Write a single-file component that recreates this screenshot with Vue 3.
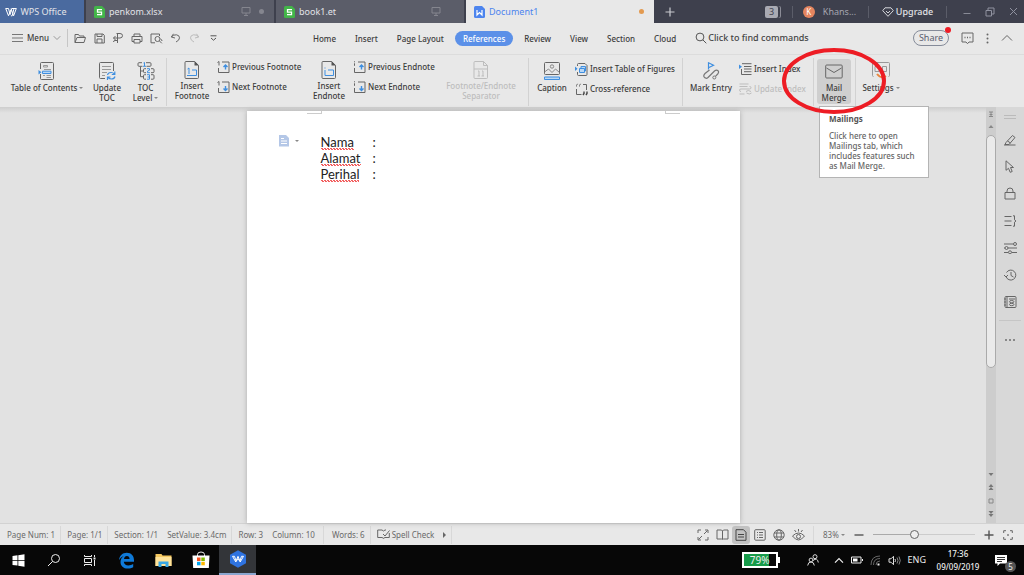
<script setup>
import { h, ref } from 'vue'

const D = '#666'
const B = '#3f8fe0'
const doc = (s, b) => `<g fill="none" stroke="${s}">${b}</g>`

// name: [width, height, markup]
const icons = {
  wps: [12, 10, '<path d="M.7 1.5h2.8l1.6 6 1.7-6H9L7.2 8.8 5.9 8.8M.7 1.5l2.8 7.3L6 2.6M11.3 1.5 8.6 8.8 6 1.5M11.4 1.5H8.6" fill="none" stroke="#fff" stroke-width="1"/>'],
  sheet: [11, 12, '<path d="M0 1.5Q0 0 1.500 0H8l3 3v7.500q0 1.500-1.500 1.500h-8Q0 12 0 10.500z" fill="#43b549"/><path d="M8 3.700H3.500v2.500h4v2.500H3" fill="none" stroke="#fff" stroke-width="1.300"/>'],
  word: [11, 12, '<path d="M0 1.5Q0 0 1.500 0H8l3 3v7.500q0 1.500-1.500 1.500h-8Q0 12 0 10.500z" fill="#4c84ee"/><path d="M3 4v5l2.500-2.500L8 9V4" fill="none" stroke="#fff" stroke-width="1.200"/>'],
  monitor: [10, 9, '<path d="M1 .5h8v5.500H1zM5 6v2.500M3 8.500h4" fill="none" stroke="#85868f"/>'],
  plus: [10, 10, '<path d="M5 .5v9M.5 5h9" fill="none" stroke="#c9cad0" stroke-width="1.200"/>'],
  gem: [12, 10, '<path d="M3 .8h6L11.300 3.700 6 9.300.7 3.700zM4 4l2 2 2-2" fill="none" stroke="#d4d5da"/>'],
  min: [8, 8, '<path d="M.5 5.500h7" stroke="#888a96"/>'],
  restore: [10, 10, '<path d="M1 3.500h5.500V9H1zM3 3.500V1h6v6H6.500" fill="none" stroke="#9092a0"/>'],
  close: [9, 9, '<path d="m1 1 7 7M8 1 1 8" stroke="#9092a0"/>'],
  burger: [11, 8, '<path d="M0 .5h11M0 4h11M0 7.500h11" stroke="#777"/>'],
  chev: [8, 6, '<path d="m.7 1.200 3.300 3.300 3.300-3.300" fill="none" stroke="#999"/>'],
  up: [12, 8, '<path d="m1 6.500 5-5 5 5" fill="none" stroke="#666"/>'],
  open: [12, 11, doc(D, '<path d="M1 9.500V1.500h3.500l1 1.500h4.500v1.500M1 9.500l2-5h8.500l-1.500 5z"/>')],
  save: [11, 11, doc(D, '<path d="M1 1h8l1.300 1.300V10H1zM3 1v2.500h5V1M3 10V6h5v4"/>')],
  output: [12, 12, doc(D, '<path d="M4.500 1.500H8q2.500 0 2.500 2.200T8 6H1.500M3.500 4 1.500 6l2 2M5.500 1.500v9.500M5.500 8.500H3q-1.500 0-1.500 1.500"/>')],
  print: [12, 11, doc(D, '<path d="M3 3.500V1h6v2.500M3 8.500H1v-5h10v5H9M3 6.500h6V10H3z"/>')],
  preview: [13, 11, doc(D, '<path d="M5 9.800H1V1h8.500v2"/><circle cx="7.500" cy="6" r="2.500"/><path d="m9.500 8 2.300 2.300M10.500 6q1.500.5 1.500 2"/>')],
  undo: [11, 10, doc(D, '<path d="M3.500.8 1.300 4 5 5M1.500 3.800q2-2.300 5-2 3 .5 3 3T6 9"/>')],
  redo: [11, 10, doc('#bbb', '<path d="M7.500.8 9.700 4 6 5M9.500 3.800q-2-2.300-5-2-3 .5-3 3T5 9"/>')],
  more: [7, 6, '<path d="M.5.8h6" stroke="#555"/><path d="m1 3 2.500 2.200L6 3" fill="none" stroke="#555"/>'],
  search: [12, 12, '<circle cx="5" cy="5" r="3.900" fill="none" stroke="#555"/><path d="m7.800 7.800 3.500 3.500" stroke="#555"/>'],
  chat: [13, 13, doc(D, '<path d="M1 1h11v9H8l-1.500 1.700L5 10H1z"/><path d="M3.500 5.500h1M6 5.500h1M8.500 5.500h1" stroke-width="1.500"/>')],
  vdots: [3, 11, '<g fill="#666"><circle cx="1.500" cy="1.500" r="1"/><circle cx="1.500" cy="5.500" r="1"/><circle cx="1.500" cy="9.500" r="1"/></g>'],
  toc: [18, 18, doc(D, '<path d="M2.500 7V1.500q0-1 1-1h11q1 0 1 1V16.500q0 1-1 1h-11q-1 0-1-1V12"/>') + doc('#999', '<path d="M5.500 3.500h4v1.500h-4zM6 7.500h7M5 13.500h2M8.500 13.500H13M8.500 15.500H13"/>') + `<path d="M4.500 9.200h8.500v2.300H4.500z" fill="#b9d7f5" stroke="${B}"/><path d="m.5 8 3 2.300-3 2.300z" fill="${B}"/>`],
  update: [18, 18, doc(D, '<path d="M7 16.500H2.500q-1 0-1-1v-14q0-1 1-1h12q1 0 1 1V9"/><path d="M4 4.500h9M4 7.500h9M4 10.500h5M4 13.500h3" stroke="#999"/>') + doc(B, '<path d="M9.500 13q.5-2.500 3.500-2.500 2 0 3.500 1.500M16.800 9.500V12.500h-3M17 14.500q-.7 2.500-3.500 2.500-2 0-3.500-1.500M9.500 18v-3h3" stroke-width="1.200"/>')],
  level: [18, 18, doc(D, '<path d="M5 .7H2q-1 0-1 1v1.600q0 1 1 1h3.500M9 .7h4q1 0 1 1v1.600q0 1-1 1H9.500M3.500 4.500v10.200h3M3.500 9h3M9 6.700H7.500q-1 0-1 1v2q0 1 1 1H9M14 6.700h2q1 0 1 1v2q0 1-1 1h-2M9 12.700H7.500q-1 0-1 1v2.500q0 1 1 1H9M14 12.700h2q1 0 1 1v2.500q0 1-1 1h-2"/>') + `<path d="M6.500 1 7.500.5V4M6 4.300h3M10 6.700h2.500v1.500l-2 1v1.500H13M10 12.700h2.500v4.500H10M10.500 15h2" fill="none" stroke="${B}"/>`],
  footnote: [16, 18, doc(D, '<path d="M2 .5h8.500l4 4v12q0 1-1 1H2q-1 0-1-1v-15q0-1 1-1z"/>') + `<path d="M10.500 0 15 4.500h-4.500z" fill="#555"/><path d="M3.500 8 5 7v6M3 14.500h9.500V9H8" fill="none" stroke="${B}"/>`],
  endnote: [16, 18, doc(D, '<path d="M2 .5h8.500l4 4v12q0 1-1 1H2q-1 0-1-1v-15q0-1 1-1z"/>') + `<path d="M10.500 0 15 4.500h-4.500z" fill="#555"/><path d="M4 6.500v1M4 9v5.500h8.500V9H7" fill="none" stroke="${B}"/>`],
  separator: [16, 18, doc('#bdbdbd', '<path d="M2 .5h8.500l4 4v12q0 1-1 1H2q-1 0-1-1v-15q0-1 1-1zM1 8h14M10.500.5v4h4M5 10h1v5M9 10h1v5M4.500 15H7M8.500 15H11"/>')],
  prevF: [13, 12, doc(D, '<path d="M.5 1.500 2 .5v4M3 11.500H1.500V7M5 1h7v10.500H2"/>') + `<path d="M8.500 8.500V4.500M6.500 6 8.500 4l2 2" fill="none" stroke="${B}" stroke-width="1.400"/>`],
  nextF: [13, 12, doc(D, '<path d="M.5 1.500 2 .5v4M1.500 7v4.500H12V1H5"/>') + `<path d="M8.500 5v4M6.500 7.500l2 2 2-2" fill="none" stroke="${B}" stroke-width="1.400"/>`],
  prevE: [13, 12, doc(D, '<path d="M1.500.3v1M1.500 2.300v2.500M3 11.500H1.500V7M5 1h7v10.500H2"/>') + `<path d="M8.500 8.500V4.500M6.500 6 8.500 4l2 2" fill="none" stroke="${B}" stroke-width="1.400"/>`],
  nextE: [13, 12, doc(D, '<path d="M1.500.3v1M1.500 2.300v2.500M1.500 7v4.500H12V1H5"/>') + `<path d="M8.500 5v4M6.500 7.500l2 2 2-2" fill="none" stroke="${B}" stroke-width="1.400"/>`],
  caption: [18, 18, doc('#888', '<rect x="1.500" y=".5" width="15" height="12" rx="1" stroke="#666"/><circle cx="9" cy="4.500" r="1.700"/><path d="m1.500 10 4-3 3.500 3.500L12.500 7l4 3.500"/>') + `<path d="M1.500 15h15v2.500h-15z" fill="#b9d7f5" stroke="${B}"/>`],
  figures: [13, 13, doc(D, '<path d="M2.500 3V1.500q0-1 1-1H10l2 2v9q0 1-1 1H3.500q-1 0-1-1V9"/>') + `<path d="M4.500 5.500h5v4h-5zM6 5.500v-2h4.500v4.500H9.500" fill="#b9d7f5" stroke="${B}"/><path d="m0 3.500 2.500 2.300L0 8z" fill="${B}"/>`],
  cross: [13, 13, doc(D, '<path d="M1.500 3.500v-1L2.500.8M4.500 3.500v-1L5.500.8M1.500 6v5.500h5M8 1.500h3.500V7" /><path d="M9 8.500v2L8 12M12 8.500v2L11 12" stroke-width="1.400" stroke="#444"/>')],
  mark: [18, 18, doc('#777', '<path d="M7.500 8 3 11.500q-2 2-.7 3.700 1.700 2 3.700.3L12.500 9q2-1.700 3.500-.3 1.300 1.500-.3 3.300l-2.200 2.300" stroke-width="1.200"/><circle cx="12.300" cy="15.500" r="1.500"/>') + `<path d="M6.500 7.500V.8L11.500 3.200 6.500 5.700" fill="none" stroke="${B}" stroke-width="1.200"/>`],
  index: [13, 12, doc(D, '<path d="M3 .7h9.500M5 3.500h7.500M5 6h7.500M2.500 6v5.500h10M5 8.700h7.500"/>') + `<path d="m0 1.500 3 2.300L0 6z" fill="${B}"/>`],
  updIndex: [13, 12, doc('#bdbdbd', '<path d="M.5 1h9M.5 3.500h8M2 8.500q-1.500 0-1.500-1.300T2 6h8.500q1.500 0 1.500-1.300T10.500 3.500M.5 11h5M7 8.500q2-2 5 0M12.500 10q-2 2-5 0"/>')],
  mail: [18, 15, doc('#666', '<rect x=".7" y="1" width="16.500" height="13" rx="1"/><path d="m1.500 4 7.500 4.500L16.500 4"/>')],
  settings: [18, 18, doc('#999', '<path d="M1.500 14.500q-1 0-1-1v-12q0-1 1-1h15q1 0 1 1v12q0 1-1 1M3 4.500h4v5H3zM10.500 4.500h4v5h-4z"/>') + '<path d="M5 12q4 5 9 2" fill="none" stroke="#e9863c" stroke-width="2"/>'],
  smart: [10, 12, '<path d="M0 0h7l3 3v8.500H0z" fill="#b4c7e7"/><path d="M2 3.500h3M2 6h6M2 8.500h6" stroke="#fff"/>'],
  pen: [14, 12, doc(D, '<path d="M1 11h11.500M3 8.500 9.500 1.500l2.500 2L6 10.500H2zM4.500 7l3 2"/>')],
  cursor: [12, 13, doc(D, '<path d="M2 .8v9.500l2.500-2 1.700 4 2-.8-1.700-4h3z"/>')],
  lock: [12, 13, doc(D, '<path d="M1 5.500h10V12H1zM3 5.500V4q0-3 3-3t3 3v1.500"/>')],
  outline: [13, 12, doc(D, '<path d="M.5 1.500h7M.5 6h7M.5 10.500h7M9 .8h1.500v4l1.500 1.200-1.500 1.200v4H9"/>')],
  sliders: [13, 12, doc(D, '<path d="M0 2h9M0 6h1M4 6h9M0 10.500h4M8 10.500h5"/><circle cx="11" cy="2" r="1.500"/><circle cx="2.500" cy="6" r="1.500"/><circle cx="6" cy="10.300" r="1.500"/>')],
  history: [13, 12, doc(D, '<path d="M2 7.500a5 5 0 1 0 .5-4M0 6l2 2 2-2M7 3v3.500L9.500 8"/>')],
  backup: [13, 12, doc(D, '<rect x="1" y=".5" width="11" height="11" rx="1"/><path d="M3 .5v11M0 3h2M0 6h2M0 9h2M5 3h6"/><ellipse cx="7.700" cy="5.700" rx="2.200" ry="1.200"/><ellipse cx="7.700" cy="8.500" rx="2.200" ry="1.200"/>')],
  spell: [13, 11, doc(D, '<path d="M6 9 5 8.500H.7V1H5l1.500 1L8 1h1M12.300 4v4.500H8L6 9.500M6 5l2 2 4.500-5.500"/>')],
  full: [12, 12, doc(D, '<path d="M1 4V1h3M8 1h3v3M11 8v3H8M4 11H1V8M1.500 10.500 5 7M7 5l3.500-3.500"/>')],
  book: [13, 11, doc(D, '<path d="M1 1h4.500l1 1 1-1H12v9H7.500l-1 .5-1-.5H1zM6.500 2v8"/>')],
  page: [12, 12, doc('#444', '<path d="M1 .7h7.500L11 3.300v8H1zM3 5.500h6M3 8h6"/>')],
  list: [12, 12, doc(D, '<rect x=".7" y=".7" width="10.500" height="10.500" rx="1"/><path d="M3 3.500h1M5 3.500h4M3 6h1M5 6h4M3 8.500h1M5 8.500h4"/>')],
  globe: [12, 12, doc(D, '<circle cx="6" cy="6" r="5.200"/><ellipse cx="6" cy="6" rx="2.300" ry="5.200"/><path d="M1 4h10M1 8h10"/>')],
  eye: [13, 13, doc(D, '<path d="M.5 8q6-6 12 0-6 8-12 0M6.500 1v2.500M2.500 2 4 4M10.500 2 9 4"/><circle cx="6.500" cy="8.500" r="2"/>')],
  minus: [10, 10, '<path d="M.5 5h9" stroke="#555" stroke-width="1.400"/>'],
  add: [10, 10, '<path d="M.5 5h9M5 .5v9" stroke="#555" stroke-width="1.400"/>'],
  focus: [10, 10, doc(D, '<path d="M.7 3V.7H3M7 .7h2.300V3M9.300 7v2.300H7M3 9.300H.7V7"/><path d="M4.200 5h1.600" stroke-width="1.600"/>')],
  win: [13, 13, '<path d="M.5 2 5.500 1.300V6H.5zM6.300 1.200 12.500.3V6H6.300zM.5 6.800h5v4.800L.5 11zM6.300 6.800h6.200v5.900l-6.200-.9z" fill="#fff"/>'],
  find: [14, 14, '<circle cx="8.500" cy="5.500" r="4" fill="none" stroke="#eee"/><path d="M5.500 8.500 1 13" stroke="#eee"/>'],
  task: [14, 13, '<path d="M1.500 2.500V1M8.500 1v1.500H1.500M1.500 4.500h7v4h-7zM1.500 12v-1.500h7V12M11.500 1v2M11.500 6v6" fill="none" stroke="#eee"/><path d="M10.500 3.500h2v2h-2z" fill="#eee"/>'],
  edge: [17, 17, '<path d="M1 8.200C1.500 3.500 4.700.8 8.700.8c4.800 0 7.300 3.200 7.300 7.400v1.600H5.800c.2 2.500 2.200 3.600 4.500 3.600 2 0 3.500-.6 4.900-1.400v3.200c-1.500.9-3.300 1.300-5.400 1.300-4.500 0-7.300-2.600-7.300-6.600 0-2.500 1.200-4.500 3.200-5.700C3.500 4.600 1.800 6.300 1 8.200zM6 7h5.600C11.500 5 10.500 4 8.900 4S6.300 5.100 6 7z" fill="#0f7ad8"/>'],
  folder: [17, 15, '<path d="M.5 1h6l1 1.500h9V13H.5z" fill="#f5c860"/><path d="M.5 4h16v9H.5z" fill="#ffe39a"/><path d="M3.500 14V8.500h10V14h-3v-3h-4v3z" fill="#3aa7e4"/>'],
  store: [18, 18, '<path d="M5.500 5V3.500q0-2.500 3.500-2.500t3.500 2.500V5" fill="none" stroke="#eee"/><path d="M.5 4.500h17l-.7 12.500H1.200z" fill="#fff"/><path d="M5 6.500h3.500V10H5z" fill="#f25022"/><path d="M9.300 6.500h3.500V10H9.300z" fill="#7fba00"/><path d="M5 10.800h3.500v3.500H5z" fill="#00a4ef"/><path d="M9.300 10.800h3.500v3.500H9.300z" fill="#ffb900"/>'],
  hexa: [18, 18, '<path d="M9 .3 17 4.700v8.600L9 17.700 1 13.300V4.700z" fill="#2f73e0"/><path d="M3.500 6.300h2l1.600 4.700L9 6.300l1.900 4.700 1.600-4.700h2L11.200 12 9 8.500 6.800 12z" fill="none" stroke="#fff"/>'],
  people: [12, 12, doc('#ddd', '<circle cx="8" cy="2.700" r="2"/><circle cx="4" cy="6" r="1.900"/><path d="M.7 11.500Q1 8 4 8t3.300 3.500M6 6.500Q10.500 3 11.300 8.500"/>')],
  upW: [10, 7, '<path d="m1 5.700 4-4 4 4" fill="none" stroke="#eee" stroke-width="1.200"/>'],
  batt: [12, 8, '<path d="M.5 1h9.500v6H.5zM11.500 3v2" fill="none" stroke="#eee"/><path d="M2 2.500h4.500v3H2z" fill="#fff"/>'],
  wifi: [11, 11, doc('#666', '<path d="M1 10Q1 1 10 1M3.500 10q0-6.500 6.500-6.500M6 10q0-4 4-4"/>') + '<path d="M7.500 9.500h2" stroke="#eee" stroke-width="2"/>'],
  sound: [13, 11, doc('#ddd', '<path d="M1 3.800h2l2.500-2.500v8.400L3 7.200H1zM7 4q1 1.500 0 3"/><path d="M9 2.500q2 3 0 6M11 1.500q2.500 4 0 8" stroke="#888"/>')],
  note: [14, 13, '<path d="M1 1h12v8.500H6L3.500 12V9.500H1z" fill="#fff"/><path d="M3 3.500h8M3 5.500h8M3 7.500h5" stroke="#333"/>']
}
const Icon = ({ name }) => {
  const [w, ht, body] = icons[name]
  return h('svg', { class: 'ic', width: w, height: ht, viewBox: `0 0 ${w} ${ht}`, 'aria-hidden': 'true', innerHTML: body })
}
Icon.props = ['name']

const quick = ['open', 'save', 'output', 'print', 'preview', 'undo', 'redo', 'more']
const menus = ['Home', 'Insert', 'Page Layout', 'References', 'Review', 'View', 'Section', 'Cloud']
const ribbon = [
  [
    { icon: 'toc', lines: ['Table of Contents'], caret: true, w: 84 },
    { icon: 'update', lines: ['Update', 'TOC'], w: 36 },
    { icon: 'level', lines: ['TOC', 'Level'], caret: true, w: 41 }
  ],
  [
    { icon: 'footnote', lines: ['Insert', 'Footnote'], w: 50 },
    { stack: [['prevF', 'Previous Footnote'], ['nextF', 'Next Footnote']], w: 88 },
    { icon: 'endnote', lines: ['Insert', 'Endnote'], w: 48 },
    { stack: [['prevE', 'Previous Endnote'], ['nextE', 'Next Endnote']], w: 88 },
    { icon: 'separator', lines: ['Footnote/Endnote', 'Separator'], off: true, w: 80 }
  ],
  [
    { icon: 'caption', lines: ['Caption'], w: 46 },
    { stack: [['figures', 'Insert Table of Figures'], ['cross', 'Cross-reference']], w: 107 }
  ],
  [
    { icon: 'mark', lines: ['Mark Entry'], w: 56 },
    { stack: [['index', 'Insert Index'], ['updIndex', 'Update Index', true]], w: 74 }
  ],
  [{ icon: 'mail', lines: ['Mail', 'Merge'], hot: true, w: 34 }],
  [{ icon: 'settings', lines: ['Settings'], caret: true, w: 50 }]
]
const fields = ['Nama', 'Alamat', 'Perihal']
const side = ['pen', 'cursor', 'lock', 'outline', 'sliders', 'history', 'backup']
const views = ['full', 'book', 'page', 'list', 'globe', 'eye']
const apps = [['win', 'Start'], ['find', 'Search'], ['task', 'Task View'], ['edge', 'Edge'], ['folder', 'File Explorer'], ['store', 'Store'], ['hexa', 'WPS Office']]
const active = ref('References')
const zoom = ref(40)
</script>

<template>
  <div class="app">
    <header class="titlebar">
      <button class="home"><Icon name="wps" />WPS Office</button>
      <button class="tab"><Icon name="sheet" /><span>penkom.xlsx</span><Icon name="monitor" /><i class="dot"></i></button>
      <button class="tab"><Icon name="sheet" /><span>book1.et</span><Icon name="monitor" /><i class="dot none"></i></button>
      <button class="tab current"><Icon name="word" /><span>Document1</span><i class="dot"></i></button>
      <button class="new" aria-label="New tab"><Icon name="plus" /></button>
      <div class="account">
        <span class="count">3</span>
        <button class="user"><span class="avatar">K</span>Khans...</button>
        <button class="upgrade"><Icon name="gem" />Upgrade</button>
        <div class="window">
          <button aria-label="Minimize"><Icon name="min" /></button>
          <button aria-label="Restore"><Icon name="restore" /></button>
          <button aria-label="Close"><Icon name="close" /></button>
        </div>
      </div>
    </header>

    <div class="menubar">
      <button class="menu"><Icon name="burger" />Menu<Icon name="chev" /></button>
      <div class="quick">
        <button v-for="q in quick" :key="q" :aria-label="q"><Icon :name="q" /></button>
      </div>
      <nav class="menus">
        <button v-for="m in menus" :key="m" :class="{ on: active === m }" @click="active = m">{{ m }}</button>
      </nav>
      <label class="find"><Icon name="search" /><input type="text" placeholder="Click to find commands" aria-label="Click to find commands"></label>
      <div class="right">
        <button class="share">Share<i></i></button>
        <button aria-label="Feedback"><Icon name="chat" /></button>
        <button aria-label="More"><Icon name="vdots" /></button>
        <button aria-label="Collapse ribbon"><Icon name="up" /></button>
      </div>
    </div>

    <div class="ribbon">
      <div v-for="(g, gi) in ribbon" :key="gi" class="group" :class="{ upper: gi === 1 }">
        <template v-for="(it, i) in g" :key="i">
          <div v-if="it.stack" class="stack" :style="{ width: it.w + 'px' }">
            <button v-for="s in it.stack" :key="s[0]" :class="{ off: s[2] }"><Icon :name="s[0]" />{{ s[1] }}</button>
          </div>
          <div v-else class="cell" :class="{ hot: it.hot }">
            <button class="big" :class="{ off: it.off }" :style="{ width: it.w + 'px' }">
              <span class="pic"><Icon :name="it.icon" /></span>
              <span v-for="(l, li) in it.lines" :key="l" class="line">{{ l }}<i v-if="it.caret && li === it.lines.length - 1" class="caret"></i></span>
            </button>
            <template v-if="it.hot">
              <div class="tip" role="tooltip"><b>Mailings</b><p>Click here to open Mailings tab, which includes features such as Mail Merge.</p></div>
              <svg class="ring" width="106" height="68" viewBox="0 0 106 68" aria-hidden="true"><ellipse cx="53" cy="34" rx="50" ry="31" fill="none" stroke="#ed1c24" stroke-width="4" /></svg>
            </template>
          </div>
        </template>
      </div>
    </div>

    <main class="work">
      <div class="canvas">
        <article class="page">
          <i class="crop left"></i><i class="crop rightc"></i>
          <div class="smart"><Icon name="smart" /><i class="caret"></i></div>
          <div class="text">
            <p v-for="f in fields" :key="f"><span class="key"><span class="typo">{{ f }}</span></span>:</p>
          </div>
        </article>
      </div>
      <div class="scroll">
        <svg width="10" height="24" viewBox="0 0 10 24" aria-hidden="true"><path d="M3 5h4M5 5v5M3 9.500h4M3.500 7.500h3" stroke="#888" fill="none" /><path d="M2.500 21 5 18l2.500 3z" fill="#888" /></svg>
        <div class="thumb"></div>
        <svg width="10" height="54" viewBox="0 0 10 54" aria-hidden="true"><path d="M2.500 4h5L5 7zM5 15l2.500 3h-5zM5 18l2.500 3h-5zM2.500 42h5L5 45zM2.500 45h5L5 48z" fill="#777" /><path d="M3 30h4v4H3z" fill="none" stroke="#888" /></svg>
      </div>
      <aside class="side">
        <i class="grip"></i>
        <button v-for="s in side" :key="s" :aria-label="s"><Icon :name="s" /></button>
        <i class="rule"></i>
        <button class="dots" aria-label="more tools"><i></i><i></i><i></i></button>
      </aside>
    </main>

    <footer class="status">
      <span class="cut">Page Num: 1</span>
      <span class="cut">Page: 1/1</span>
      <span>Section: 1/1</span>
      <span class="cut">SetValue: 3.4cm</span>
      <span>Row: 3</span>
      <span class="cut wide">Column: 10</span>
      <span class="cut">Words: 6</span>
      <button class="spell cut"><Icon name="spell" />Spell Check<i></i></button>
      <div class="views">
        <button v-for="v in views" :key="v" :class="{ on: v === 'page' }" :aria-label="v"><Icon :name="v" /></button>
      </div>
      <label class="percent"><select aria-label="Zoom level"><option>83%</option></select><i class="caret"></i></label>
      <button class="step" aria-label="Zoom out"><Icon name="minus" /></button>
      <input v-model="zoom" class="slider" type="range" aria-label="Zoom">
      <button class="step" aria-label="Zoom in"><Icon name="add" /></button>
      <button class="fit" aria-label="Fit"><Icon name="focus" /></button>
    </footer>

    <div class="taskbar">
      <button v-for="a in apps" :key="a[0]" class="app-btn" :class="{ on: a[0] === 'hexa' }" :aria-label="a[1]"><Icon :name="a[0]" /></button>
      <div class="tray">
        <span class="charge"><b>79%</b></span>
        <Icon name="people" class="who" />
        <Icon name="upW" /><Icon name="batt" /><Icon name="wifi" /><Icon name="sound" />
        <span class="lang">ENG</span>
        <span class="clock">17:36<br>09/09/2019</span>
        <button class="note" aria-label="Notifications"><Icon name="note" /><span>5</span></button>
      </div>
    </div>
  </div>
</template>

<style>
body { margin: 0; }
</style>

<style scoped>
.app { display: flex; flex-direction: column; height: 100vh; overflow: hidden; font: 8px/10px "Noto Sans", "Open Sans", sans-serif; color: #3c3c3c; background: #e8e8e8; }
.app * { box-sizing: border-box; }
button, input, select { font: inherit; color: inherit; background: none; border: 0; padding: 0; margin: 0; }
button { display: flex; align-items: center; justify-content: center; white-space: nowrap; }
.ic { display: block; flex: none; }
p { margin: 0; }

.titlebar { display: flex; flex: none; height: 23px; gap: 2px; background: #3e404d; color: #e2e3e8; font-size: 9px; line-height: 12px; }
.home { width: 84px; gap: 3px; padding-right: 12px; background: #4a6a9f; }
.tab { width: 188px; justify-content: flex-start; gap: 4px; padding: 0 10px 0 8px; background: #5b5d69; }
.tab span { flex: 1; text-align: left; }
.dot { width: 5px; height: 5px; margin-left: 4px; border-radius: 50%; background: #85868f; }
.dot.none { background: none; }
.current { background: #e8e8e8; color: #4c84ee; }
.current .dot { background: #e39a50; }
.new { width: 28px; }
.account { display: flex; align-items: center; margin-left: auto; }
.count { width: 13px; height: 12px; margin-right: 14px; border-radius: 2px; background: #a9aab3; color: #3e404d; text-align: center; box-shadow: 2px 0 0 #3e404d, 3px 0 0 #8b8c96; }
.user { width: 77px; height: 12px; gap: 8px; padding-right: 2px; border-left: 1px solid #5b5d69; border-right: 1px solid #5b5d69; color: #a4a5af; }
.avatar { width: 12px; height: 12px; border-radius: 50%; background: #e5855f; font-size: 8px; text-align: center; color: #fff; }
.upgrade { width: 78px; height: 12px; gap: 2px; border-right: 1px solid #5b5d69; font-weight: 500; }
.window { display: flex; gap: 14px; padding: 0 6px 0 16px; }

.menubar { display: flex; align-items: center; flex: none; height: 32px; padding-bottom: 1px; border-bottom: 1px solid #dcdcdc; font-weight: 500; }
.menu { height: 18px; gap: 4px; padding: 0 6px 0 12px; border-right: 1px solid #c6c6c6; }
.quick { display: flex; padding-left: 3px; }
.quick button { width: 19px; }
.menus { display: flex; gap: 3px; margin-left: 82px; padding-top: 1px; }
.menus button { height: 15px; padding: 0 8px; border-radius: 8px; }
.menus .on { background: #5b90e8; color: #fff; }
.find { display: flex; align-items: center; flex: 1; gap: 1px; margin-left: 11px; }
.find input { width: 120px; font-size: 9px; line-height: 12px; outline: 0; }
.find input::placeholder { color: #444; opacity: 1; }
.right { display: flex; align-items: center; gap: 12px; padding-right: 11px; }
.share { position: relative; width: 36px; height: 16px; border: 1px solid #858b99; border-radius: 8px; color: #5c6070; font-size: 9px; font-weight: 400; }
.share i { position: absolute; right: -3px; top: -4px; width: 6px; height: 6px; border-radius: 50%; background: #ee1c25; }

.ribbon { display: flex; flex: none; height: 52px; padding-left: 5px; font-weight: 500; }
.group { display: flex; position: relative; padding-right: 1px; }
.upper { padding-right: 8px; }
.group:not(:last-child)::after { content: ""; position: absolute; right: 0; top: 3px; bottom: 1px; width: 1px; background: #d2d2d2; }
.cell { position: relative; padding-top: 4px; }
.big { flex-direction: column; justify-content: flex-start; height: 45px; }
.pic { display: flex; align-items: center; height: 24px; }
.upper .pic { height: 22px; }
.line { display: flex; align-items: center; }
.caret { width: 0; height: 0; margin-left: 2px; border: 2px solid transparent; border-top-color: #888; border-bottom: 0; }
.off { color: #bdbdbd; }
.hot { padding-left: 3px; padding-right: 4px; }
.hot .big { background: #cfcfcf; border-radius: 3px; }
.stack { display: flex; flex-direction: column; gap: 8px; padding-top: 8px; }
.upper .stack { padding-top: 6px; }
.stack button { height: 12px; gap: 2px; justify-content: flex-start; }
.tip { position: absolute; z-index: 2; left: 5px; top: 51px; width: 110px; padding: 7px 8px 6px 9px; background: #fff; border: 1px solid #b4b4b4; color: #666; }
.tip b { color: #555; }
.tip p { margin-top: 7px; }
.ring { position: absolute; z-index: 3; left: -33px; top: -8px; }

.work { display: flex; flex: 1; min-height: 0; }
.canvas { display: flex; justify-content: center; flex: 1; padding-top: 4px; background: linear-gradient(#cdcdcd, #e2e2e2 6px); }
.page { position: relative; display: flex; width: 50%; padding: 23px 0 0 32px; background: #fff; box-shadow: 0 0 5px #aaa; }
.crop { position: absolute; top: 0; width: 15px; height: 3px; border-bottom: 1px solid #ccc; }
.left { left: 60px; border-right: 1px solid #ccc; }
.rightc { right: 60px; border-left: 1px solid #ccc; }
.smart { display: flex; gap: 4px; width: 42px; height: 14px; align-items: center; }
.text { font: 13px/16px Lato, sans-serif; color: #222; }
.key { display: inline-block; width: 52px; }
.typo { display: inline-block; background: linear-gradient(45deg, transparent 40%, #f26060 40% 65%, transparent 65%) left bottom / 3px 2px repeat-x; }
.scroll { display: flex; flex-direction: column; width: 10px; background: #cdcdcd; }
.thumb { height: 233px; margin: 4px 0 auto; border: 1px solid #aaa; border-radius: 5px; background: #eaeaea; }
.side { display: flex; flex-direction: column; align-items: center; width: 28px; background: #d8d8d8; }
.side button { width: 28px; height: 27px; }
.grip { width: 12px; height: 4px; margin: 8px 0 7px; border: solid #bbb; border-width: 1px 0; }
.rule { width: 22px; height: 1px; margin: 5px 0; background: #c6c6c6; }
.side .dots { gap: 2px; }
.dots i { width: 2px; height: 2px; background: #888; }

.status { display: flex; align-items: center; flex: none; height: 22px; padding-left: 7px; border-top: 1px solid #d2d2d2; color: #6a6a6a; white-space: nowrap; }
.status > span { margin-right: 9px; }
.status .cut { margin-right: 6px; padding-right: 5px; border-right: 1px solid #d8d8d8; line-height: 18px; }
.status .wide { margin-right: 8px; padding-right: 8px; }
.spell { gap: 2px; }
.spell i { margin-left: 7px; border: 3px solid transparent; border-left-color: #666; border-right: 0; }
.views { display: flex; gap: 1px; margin-left: auto; padding-right: 6px; border-right: 1px solid #d8d8d8; }
.views button { width: 18px; height: 18px; border-radius: 3px; }
.views .on { background: #c2c2c2; }
.percent { display: flex; align-items: center; width: 38px; padding-left: 9px; }
.percent select { appearance: none; }
.step { width: 14px; }
.slider { appearance: none; width: 102px; height: 10px; margin: 0 7px; background: linear-gradient(90deg, #aaa 40%, #ccc 40%) center / 100% 1px no-repeat; }
.slider::-webkit-slider-thumb { appearance: none; width: 9px; height: 9px; border: 1px solid #666; border-radius: 50%; background: #eee; }
.fit { width: 28px; padding-right: 4px; }

.taskbar { display: flex; align-items: center; flex: none; height: 30px; background: #070707; color: #eee; }
.app-btn { width: 37px; height: 30px; }
.app-btn:nth-child(-n+3) { width: 36px; }
.app-btn.on { background: #333539; border-bottom: 2px solid #8aa6cf; }
.tray { display: flex; align-items: center; gap: 7px; margin-left: auto; }
.charge { position: relative; width: 36px; height: 16px; border: 2px solid #fff; background: linear-gradient(90deg, #179b49 79%, #070707 79%); font-size: 10px; line-height: 12px; text-align: center; }
.charge::after { content: ""; position: absolute; right: -4px; top: 3px; width: 2px; height: 6px; background: #fff; }
.charge b { font-weight: 400; }
.who { margin: 0 8px 0 22px; }
.lang { font-size: 9px; }
.clock { width: 50px; font-size: 8px; font-weight: 500; line-height: 13px; text-align: center; }
.note { position: relative; width: 30px; height: 26px; margin-right: 4px; padding-right: 8px; }
.note span { position: absolute; right: 4px; bottom: 1px; width: 11px; height: 11px; border-radius: 50%; background: #555; line-height: 11px; }
</style>
